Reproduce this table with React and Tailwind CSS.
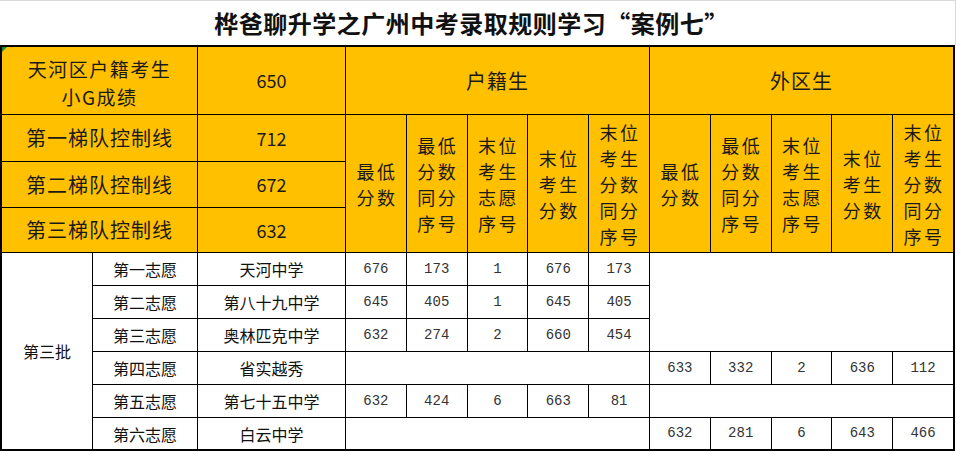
import React from "react";

const CJK = "font-['Noto_Sans_CJK_SC',sans-serif]";
const MONO = "font-['Liberation_Mono','Noto_Sans_CJK_SC',monospace]";

const LINES = [
  { label: "第一梯队控制线", score: 712 },
  { label: "第二梯队控制线", score: 672 },
  { label: "第三梯队控制线", score: 632 },
];

const SUB_HEADERS = [
  ["最低", "分数"],
  ["最低", "分数", "同分", "序号"],
  ["末位", "考生", "志愿", "序号"],
  ["末位", "考生", "分数"],
  ["末位", "考生", "分数", "同分", "序号"],
];

const ROWS = [
  { choice: "第一志愿", school: "天河中学", local: [676, 173, 1, 676, 173], other: "span3" },
  { choice: "第二志愿", school: "第八十九中学", local: [645, 405, 1, 645, 405], other: "skip" },
  { choice: "第三志愿", school: "奥林匹克中学", local: [632, 274, 2, 660, 454], other: "skip" },
  { choice: "第四志愿", school: "省实越秀", local: null, other: [633, 332, 2, 636, 112] },
  { choice: "第五志愿", school: "第七十五中学", local: [632, 424, 6, 663, 81], other: null },
  { choice: "第六志愿", school: "白云中学", local: null, other: [632, 281, 6, 643, 466] },
];

function Cell({ className = "", children }) {
  return <div className={`flex items-center justify-center text-center ${className}`}>{children}</div>;
}

function Yellow({ className = "", children }) {
  return <Cell className={`bg-[#ffc000] text-[#1a1a1a] ${CJK} ${className}`}>{children}</Cell>;
}

function SubHeader({ lines }) {
  return (
    <Yellow className="row-span-3 text-[18px] leading-[26px] tracking-[2.5px]">
      <div className="pl-[2px]">
        {lines.map((l) => (
          <div key={l}>{l}</div>
        ))}
      </div>
    </Yellow>
  );
}

function Values({ values }) {
  if (values === "skip") return null;
  if (values === "span3") return <div className="col-span-5 row-span-3 bg-white" />;
  if (!values) return <div className="col-span-5 bg-white" />;
  return values.map((v, i) => (
    <Cell key={i} className={`bg-white text-[14px] text-[#333] ${MONO}`}>
      {v}
    </Cell>
  ));
}

export default function App() {
  return (
    <div className="w-[956px] h-[451px] bg-white overflow-hidden">
      <div
        className={`h-[45px] border-t border-r border-[#d9d9d9] flex items-center justify-center pr-[12px] text-[24px] font-bold tracking-[0.5px] text-[#111] ${CJK}`}
      >
        桦爸聊升学之广州中考录取规则学习“案例七”
      </div>
      <div className="w-[955px] border-2 border-black bg-black">
        <div className="grid grid-cols-[90px_104px_147px_repeat(10,minmax(0,1fr))] grid-rows-[67px_46px_45px_44px_repeat(5,32px)_31px] gap-px">
          <Yellow className="relative col-span-2 pt-[4px] text-[19px] leading-[28px] tracking-[1.5px]">
            <span className="absolute left-0 top-0 h-0 w-0 border-t-[5px] border-r-[5px] border-t-[#1e8a3a] border-r-transparent" />
            <div>
              <div>天河区户籍考生</div>
              <div>小G成绩</div>
            </div>
          </Yellow>
          <Yellow className={`text-[18px] ${MONO}`}>650</Yellow>
          <Yellow className="col-span-5 text-[20px] tracking-[1px]">户籍生</Yellow>
          <Yellow className="col-span-5 text-[20px] tracking-[1px]">外区生</Yellow>

          {LINES.map((line, idx) => (
            <React.Fragment key={line.label}>
              <Yellow className="col-span-2 text-[20px] tracking-[1px]">{line.label}</Yellow>
              <Yellow className={`text-[18px] ${MONO}`}>{line.score}</Yellow>
              {idx === 0 &&
                [...SUB_HEADERS, ...SUB_HEADERS].map((lines, i) => <SubHeader key={i} lines={lines} />)}
            </React.Fragment>
          ))}

          {ROWS.map((row, idx) => (
            <React.Fragment key={row.choice}>
              {idx === 0 && (
                <Cell className={`row-span-6 bg-white text-[16px] text-[#111] ${CJK}`}>第三批</Cell>
              )}
              <Cell className={`bg-white text-[16px] text-[#111] ${CJK}`}>{row.choice}</Cell>
              <Cell className={`bg-white text-[16px] text-[#111] ${CJK}`}>{row.school}</Cell>
              <Values values={row.local} />
              <Values values={row.other} />
            </React.Fragment>
          ))}
        </div>
      </div>
    </div>
  );
}
